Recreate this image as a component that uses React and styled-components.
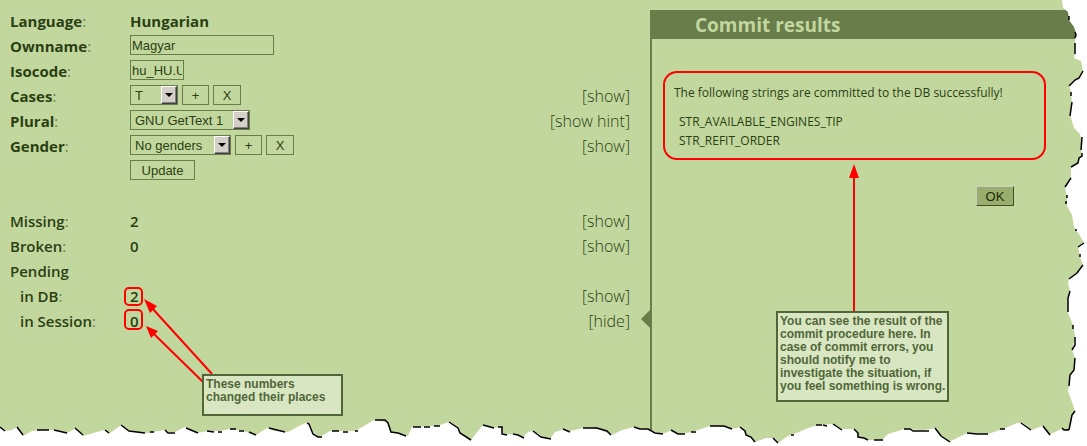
import React from "react";
import styled, { createGlobalStyle } from "styled-components";

const INK = "#2a3f12";
const OLIVE = "#697d4b";
const LEAF = "#c2d79e";

const GlobalStyle = createGlobalStyle`
  * { box-sizing: border-box; }
  body {
    margin: 0;
    background: #fff;
    color: ${INK};
    font-family: "Open Sans", sans-serif;
  }
`;

const Page = styled.div`
  position: relative;
  display: grid;
  grid-template-columns: 650fr 437fr;
  min-height: 100vh;
  overflow: hidden;
  background: ${LEAF};
`;

const Settings = styled.form`
  position: relative;
  display: flex;
  flex-direction: column;
  padding: 9px 20px 112px 10px;
`;

const Row = styled.div`
  display: grid;
  grid-template-columns: 120px 1fr auto;
  height: 25px;
  line-height: 25px;
  font-size: 15px;
  margin-top: ${(p) => (p.$section ? "25px" : "0")};
`;

const Label = styled.label`
  font-weight: ${(p) => (p.$light ? 600 : 700)};
  padding-left: ${(p) => (p.$nested ? "10px" : "0")};
`;

const Colon = styled.span`
  font-weight: 400;
  color: ${OLIVE};
`;

const Value = styled.span`
  font-weight: ${(p) => (p.$light ? 600 : 700)};
`;

const Controls = styled.div`
  display: flex;
  gap: 4px;
  padding-top: 1px;
  height: 21px;
`;

const TextInput = styled.input`
  width: ${(p) => p.$width};
  height: 20px;
  padding: 0 1px;
  border: 1px solid ${OLIVE};
  border-radius: 0;
  background: transparent;
  color: ${INK};
  font: 13px "Liberation Sans", sans-serif;
`;

const SelectBox = styled.span`
  position: relative;
  display: flex;
  width: ${(p) => p.$width};
  height: 20px;
`;

const NativeSelect = styled.select`
  appearance: none;
  width: 100%;
  height: 20px;
  padding: 0 0 0 4px;
  border: 1px solid ${OLIVE};
  border-radius: 0;
  background: transparent;
  color: ${INK};
  font: 13px "Liberation Sans", sans-serif;
`;

const DropArrow = styled.span`
  position: absolute;
  top: 1px;
  right: 1px;
  display: grid;
  place-items: center;
  width: 16px;
  height: 18px;
  border: 1px solid;
  border-color: #fff #404040 #404040 #fff;
  background: #d4d0c8;
  box-shadow: inset -1px -1px #808080;
  pointer-events: none;

  &::after {
    content: "";
    border: 4px solid transparent;
    border-top-color: #000;
    border-bottom: 0;
  }
`;

const PlainButton = styled.button`
  width: ${(p) => p.$width};
  height: 20px;
  padding: 0;
  border: 1px solid ${OLIVE};
  background: transparent;
  color: ${INK};
  font: 13px "Liberation Sans", sans-serif;
`;

const Toggle = styled.a`
  color: ${INK};
  font-weight: 300;
  font-size: 16px;
  text-decoration: none;
`;

const Marker = styled.svg`
  position: absolute;
  top: 310px;
  right: 0;
`;

const Panel = styled.section`
  display: flex;
  flex-direction: column;
  margin-top: 10px;
  border-left: 2px solid ${OLIVE};
`;

const PanelTitle = styled.h1`
  margin: 0;
  padding-left: 43px;
  background: ${OLIVE};
  color: ${LEAF};
  font-size: 19px;
  font-weight: 700;
  line-height: 30px;
  height: 29px;
`;

const Message = styled.div`
  margin: 32px 41px 0 11px;
  height: 89px;
  padding: 10px 9px 0;
  border: 2px solid #f00;
  border-radius: 14px;
  font-size: 12px;
  line-height: 19px;
  white-space: nowrap;
`;

const MessageText = styled.p`
  margin: 0 0 10px;
`;

const StringList = styled.ul`
  margin: 0;
  padding: 0 0 0 5px;
  list-style: none;
`;

const OkButton = styled.button`
  align-self: flex-end;
  width: 38px;
  height: 20px;
  margin: 26px 73px 0 0;
  padding: 0;
  border: 1px solid;
  border-color: #c9d0bd #3e5024 #3e5024 #c9d0bd;
  background: #99ae6d;
  color: #1c2a0b;
  font: 13px "Liberation Sans", sans-serif;
`;

const Callout = styled.aside`
  position: absolute;
  left: ${(p) => p.$left};
  top: ${(p) => p.$top};
  width: ${(p) => p.$width};
  height: ${(p) => p.$height};
  padding: 2px;
  border: 2px solid #506639;
  background: #d8e6c1;
  color: #506639;
  font: bold 12px/13px "Liberation Sans", sans-serif;
  white-space: pre;
`;

const Arrows = styled.svg`
  position: absolute;
  top: 0;
  left: ${(p) => p.$left};
  pointer-events: none;
`;

const RightTear = styled.svg`
  position: absolute;
  top: 0;
  right: 0;
  width: 40px;
  height: 100%;
  pointer-events: none;
`;

const BottomTear = styled.svg`
  position: absolute;
  bottom: 0;
  left: 0;
  width: 100%;
  height: 46px;
  pointer-events: none;
`;

const rightEdge =
  "15,0 16,8 21,12 22,20 27,27 29,33 28,38 28,54 27,58 34,61 36,71 32,78 25,83 22,86 24,92 25,103 23,115 27,128 33,134 35,142 34,150 35,154 31,163 24,167 24,178 18,187 20,197 20,206 25,215 27,227 32,234 37,243 31,247 33,257 36,265 30,273 22,279 21,283 23,291 21,296 21,313 26,325 28,337 25,350 28,358 27,370 23,375 22,386 21,391 25,402 28,411 25,415 22,430 16,430 16,446";

const rightCracks =
  "M22 16V20M28 32L29 35L28 38M28 43V54M36 71L32 78L28 80L22 86M24 92V96M25 102L23 116M35 137L34 150M35 153V156L32 158L31 163L24 167M24 178L18 187M20 195V198M19 201V204M29 229V231M37 243L31 247M33 254V257M36 265L30 273L22 279M23 291L21 298V312M26 325V329M28 337V345L25 350M28 358L27 370L23 375L22 386M28 411L25 415L22 430H16";

const bottomEdge =
  "0,27 5,31 12,30 17,27 23,36 32,31 38,30 53,30 67,33 76,28 83,36 104,30 109,34 121,25 132,32 148,33 164,30 168,32 175,32 185,27 197,33 208,31 220,31 230,29 243,31 256,35 267,28 275,31 288,32 299,26 308,22 313,32 320,37 330,31 340,31 355,31 364,26 374,20 387,22 390,32 398,33 408,36 412,27 437,26 449,22 457,26 461,33 471,40 478,31 483,25 492,28 501,27 503,35 512,34 523,37 528,32 533,31 542,36 550,39 555,32 565,29 570,31 583,28 597,29 605,32 612,35 622,30 634,27 650,30 662,34 672,30 680,34 692,32 710,26 725,27 731,29 741,27 747,35 755,42 766,38 774,38 778,43 788,36 799,32 808,28 818,25 833,24 842,29 855,29 858,37 868,40 882,40 888,34 904,29 923,30 936,28 941,36 949,42 961,36 967,33 988,34 1003,29 1017,23 1023,23 1032,30 1042,26 1049,35 1061,29 1069,30 1087,30";

const bottomCracks =
  "M0 27L5 31M17 27L23 35M37 30H49M54 30L67 33M75 28L83 35M105 30L109 33M121 25L129 31L145 33M150 32H154M165 30L168 33H175M186 28L198 33M207 31L214 32M218 32H222M230 29H236M239 31H244M249 32L256 35M269 28L285 32M307 23L309 24L313 34L318 37H322M332 31H339M343 32H348M355 31H358M375 20H385L388 23L391 32L398 33L406 36M413 27H421M424 27H430M434 26H440M449 22L458 28L460 33L471 40M483 25L494 28M498 27H502V34L507 35M513 34L518 35L524 38M533 31L541 37L551 39M563 29L570 32M583 28H597L607 31L611 35M634 27L640 29H648L655 33L663 34M671 30L678 34H685M691 32H696M710 26H724L732 29M740 27L745 31L746 35L751 37L755 42M773 38L778 43M791 35H794M816 25H822M823 25L827 26M833 24L842 30M854 29L858 33V37L864 38L868 40M874 40H883M904 29H910L913 31H929M935 28L941 36L950 42M967 33L977 34H988M1000 29H1005M1021 23L1031 30M1043 26L1050 35M1062 28L1064 30H1069";

function Select({ id, width, value }) {
  return (
    <SelectBox $width={width}>
      <NativeSelect id={id} defaultValue={value}>
        <option>{value}</option>
      </NativeSelect>
      <DropArrow />
    </SelectBox>
  );
}

function AddRemove({ name }) {
  return (
    <>
      <PlainButton type="button" $width="27px" aria-label={`Add ${name}`}>+</PlainButton>
      <PlainButton type="button" $width="28px" aria-label={`Remove ${name}`}>X</PlainButton>
    </>
  );
}

function FieldRow({ id, label, toggle, children }) {
  return (
    <Row>
      <Label htmlFor={id}>{label}<Colon>:</Colon></Label>
      <Controls>{children}</Controls>
      {toggle && <Toggle href="#">{toggle}</Toggle>}
    </Row>
  );
}

function CountRow({ label, value, toggle, nested, section }) {
  return (
    <Row $section={section}>
      <Label as="span" $light $nested={nested}>
        {label}{value !== undefined && <Colon>:</Colon>}
      </Label>
      <Value $light>{value}</Value>
      {toggle && <Toggle href="#">{toggle}</Toggle>}
    </Row>
  );
}

export default function App() {
  return (
    <>
      <GlobalStyle />
      <Page>
        <Settings onSubmit={(e) => e.preventDefault()}>
          <Row>
            <Label as="span">Language<Colon>:</Colon></Label>
            <Value>Hungarian</Value>
          </Row>
          <FieldRow id="ownname" label="Ownname">
            <TextInput id="ownname" $width="144px" defaultValue="Magyar" />
          </FieldRow>
          <FieldRow id="isocode" label="Isocode">
            <TextInput id="isocode" $width="54px" defaultValue="hu_HU.UTF-8" />
          </FieldRow>
          <FieldRow id="cases" label="Cases" toggle="[show]">
            <Select id="cases" width="48px" value="T" />
            <AddRemove name="case" />
          </FieldRow>
          <FieldRow id="plural" label="Plural" toggle="[show hint]">
            <Select id="plural" width="120px" value="GNU GetText 1" />
          </FieldRow>
          <FieldRow id="gender" label="Gender" toggle="[show]">
            <Select id="gender" width="101px" value="No genders" />
            <AddRemove name="gender" />
          </FieldRow>
          <Row>
            <span />
            <Controls>
              <PlainButton type="submit" $width="65px">Update</PlainButton>
            </Controls>
          </Row>
          <CountRow section label="Missing" value="2" toggle="[show]" />
          <CountRow label="Broken" value="0" toggle="[show]" />
          <CountRow label="Pending" />
          <CountRow nested label="in DB" value="2" toggle="[show]" />
          <CountRow nested label="in Session" value="0" toggle="[hide]" />
          <Marker width="9" height="18" viewBox="0 0 9 18">
            <path d="M9 0V18L0 9Z" fill={OLIVE} />
          </Marker>
          <Arrows $left="0" width="350" height="400" fill="none" stroke="#f00" strokeWidth="2">
            <rect x="125" y="288" width="17" height="17" rx="4" />
            <rect x="125" y="310" width="17" height="19" rx="4" />
            <path d="M212 374L152 308M203 382L154 334" />
            <path d="M144 299L157 306L150 313ZM146 326L158 331L151 338Z" fill="#f00" stroke="none" />
          </Arrows>
          <Callout $left="202px" $top="374px" $width="141px" $height="42px">
            {"These numbers\nchanged their places"}
          </Callout>
        </Settings>

        <Panel>
          <PanelTitle>Commit results</PanelTitle>
          <Message>
            <MessageText>The following strings are committed to the DB successfully!</MessageText>
            <StringList>
              <li>STR_AVAILABLE_ENGINES_TIP</li>
              <li>STR_REFIT_ORDER</li>
            </StringList>
          </Message>
          <OkButton type="button">OK</OkButton>
        </Panel>

        <Arrows $left="calc(100% - 243px)" width="20" height="320">
          <path d="M9 178h2v134H9Z" fill="#f00" />
          <path d="M10 164L15 178H5Z" fill="#f00" />
        </Arrows>
        <Callout $left="calc(100% - 311px)" $top="311px" $width="173px" $height="91px">
          {"You can see the result of the\ncommit procedure here. In\ncase of commit errors, you\nshould notify me to\ninvestigate the situation, if\nyou feel something is wrong."}
        </Callout>

        <RightTear viewBox="0 0 40 446" preserveAspectRatio="none">
          <polygon points={`${rightEdge} 40,446 40,0`} fill="#fff" />
          <path d={rightCracks} fill="none" stroke="#000" strokeWidth="1.5" />
        </RightTear>
        <BottomTear viewBox="0 0 1087 46" preserveAspectRatio="none">
          <polygon points={`${bottomEdge} 1087,46 0,46`} fill="#fff" />
          <path d={bottomCracks} fill="none" stroke="#000" strokeWidth="1.5" />
        </BottomTear>
      </Page>
    </>
  );
}
